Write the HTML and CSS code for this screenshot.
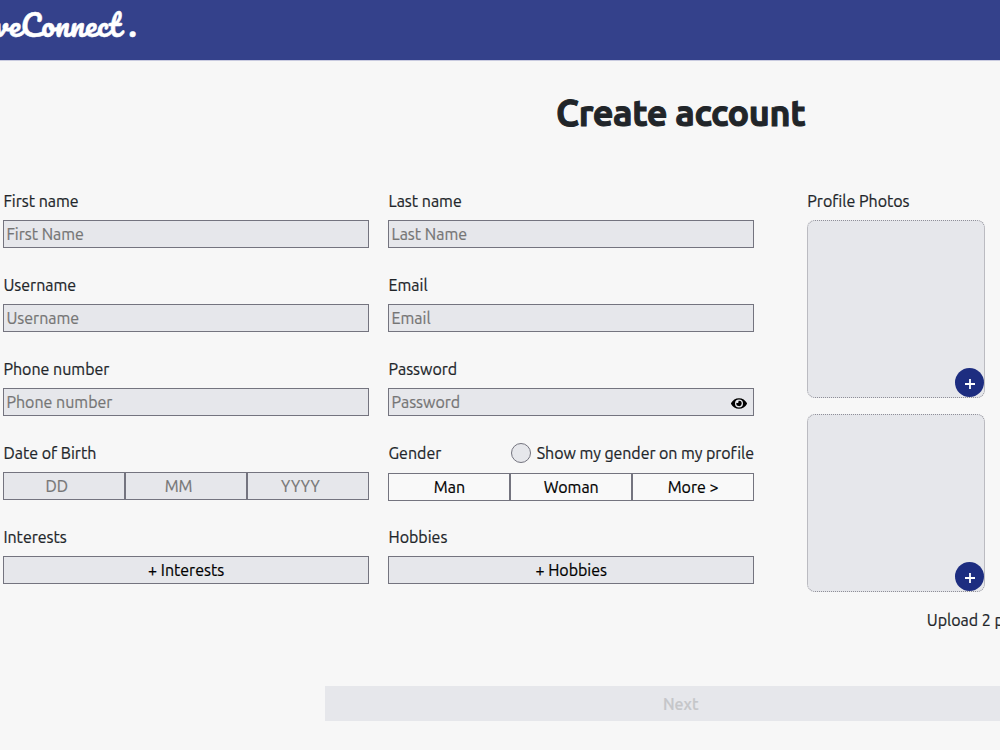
FILE: index.html
```html
<!DOCTYPE html>
<html lang="en">
    <head>
        <meta charset="UTF-8">
        <title>Create account</title>
        <link rel="stylesheet" href="styles.css">
    </head>
    <body>
        <header class="header">
            <div class="logo">LoveConnect&nbsp;.</div>
        </header>
        <main class="page">
            <h1 class="title">Create account</h1>
            <form class="form">
                <div class="fields">
                    <div class="field">
                        <label for="firstName">First name</label>
                        <input class="input" id="firstName" type="text" placeholder="First Name">
                    </div>
                    <div class="field">
                        <label for="lastName">Last name</label>
                        <input class="input" id="lastName" type="text" placeholder="Last Name">
                    </div>
                    <div class="field">
                        <label for="username">Username</label>
                        <input class="input" id="username" type="text" placeholder="Username">
                    </div>
                    <div class="field">
                        <label for="email">Email</label>
                        <input class="input" id="email" type="email" placeholder="Email">
                    </div>
                    <div class="field">
                        <label for="phone">Phone number</label>
                        <input class="input" id="phone" type="tel" placeholder="Phone number">
                    </div>
                    <div class="field">
                        <label for="password">Password</label>
                        <div class="password">
                            <input class="input" id="password" type="password" placeholder="Password">
                            <svg class="eye" viewBox="0 0 576 512">
                                <path d="M572.5 241.4C518.3 135.6 410.9 64 288 64S57.7 135.6 3.5 241.4a32.4 32.4 0 0 0 0 29.2C57.7 376.4 165.1 448 288 448s230.3-71.6 284.5-177.4a32.4 32.4 0 0 0 0-29.2zM288 400a144 144 0 1 1 144-144 143.9 143.9 0 0 1-144 144zm0-240a95.3 95.3 0 0 0-25.3 3.8 47.9 47.9 0 0 1-66.9 66.9A95.8 95.8 0 1 0 288 160z"/>
                            </svg>
                        </div>
                    </div>
                    <div class="field">
                        <label for="day">Date of Birth</label>
                        <div class="group">
                            <input class="input date" id="day" type="text" placeholder="DD">
                            <input class="input date" type="text" placeholder="MM">
                            <input class="input date" type="text" placeholder="YYYY">
                        </div>
                    </div>
                    <div class="field gender">
                        <div class="label-row">
                            <span>Gender</span>
                            <label class="show"><span class="circle"></span><span class="show-text">Show my gender on my profile</span></label>
                        </div>
                        <div class="group">
                            <button class="btn plain" type="button">Man</button>
                            <button class="btn plain" type="button">Woman</button>
                            <button class="btn plain" type="button">More &gt;</button>
                        </div>
                    </div>
                    <div class="field">
                        <label>Interests</label>
                        <button class="btn" type="button">+ Interests</button>
                    </div>
                    <div class="field">
                        <label>Hobbies</label>
                        <button class="btn" type="button">+ Hobbies</button>
                    </div>
                </div>
                <div class="photos">
                    <label>Profile Photos</label>
                    <div class="photo">
                        <span class="add"><svg viewBox="0 0 12 12"><path d="M6 1v10M1 6h10"/></svg></span>
                    </div>
                    <div class="photo">
                        <span class="add"><svg viewBox="0 0 12 12"><path d="M6 1v10M1 6h10"/></svg></span>
                    </div>
                    <p class="hint">Upload 2 photos</p>
                </div>
            </form>
            <button class="next" type="button" disabled>Next</button>
        </main>
    </body>
</html>
```
FILE: styles.css
```css
*{
    margin:0;
    padding:0;
    box-sizing:border-box;
}
html{
    overflow:hidden;
}
body{
    width:1361px;
    background:#fff;
    color:#212529;
    font-family:Ubuntu, "Noto Sans", sans-serif;
    font-size:16px;
    line-height:24px;
    -webkit-text-stroke:0.2px;
}
input,button{
    font:inherit;
}
.header{
    height:61px;
    background:#34418b;
    border-bottom:1px solid #c9cbe0;
}
.logo{
    display:flex;
    justify-content:flex-end;
    width:137px;
    height:50px;
    color:#fff;
    font-family:Pacifico, cursive;
    font-size:30px;
    line-height:50px;
    letter-spacing:0.2px;
    word-spacing:0.5px;
    -webkit-text-stroke:0.5px;
}
.page{
    height:689px;
    padding:28px 3px 0 3.4px;
    background:#f7f7f7;
}
.title{
    font-size:36px;
    font-weight:700;
    line-height:48px;
    letter-spacing:-0.4px;
    text-align:center;
    -webkit-text-stroke:1px;
}
.form{
    display:flex;
    gap:53.3px;
    margin-top:52px;
}
.fields{
    display:grid;
    grid-template-columns:365.5px 365.5px;
    grid-auto-rows:60px;
    gap:24px 19.6px;
}
.field{
    display:flex;
    flex-direction:column;
    gap:7px;
}
.field > label,.label-row,.photos > label{
    height:24px;
}
.input,.btn{
    width:100%;
    height:28px;
    padding:0 2px;
    background:#e6e7eb;
    border:1px solid #74747f;
    border-radius:0;
    line-height:24px;
}
.input::placeholder{
    color:#757575;
}
.password{
    position:relative;
}
.eye{
    position:absolute;
    top:8px;
    right:7px;
    width:16px;
    height:15px;
}
.group{
    display:flex;
}
.date{
    padding-right:17px;
    text-align:center;
}
.gender{
    gap:8px;
}
.label-row,.show{
    display:flex;
    justify-content:space-between;
}
.show{
    align-items:center;
    gap:6px;
    letter-spacing:-0.06px;
}
.circle{
    width:20px;
    height:20px;
    background:#e6e7eb;
    border:1px solid #74747f;
    border-radius:50%;
}
.btn{
    color:#000;
}
.plain{
    background:#f9f9f9;
}
.photos{
    width:551px;
}
.photo{
    position:relative;
    width:178px;
    height:178px;
    margin-bottom:16px;
    background:#e6e7eb;
    border:1px dotted #8f8f98;
    border-radius:8px;
}
.photos > label{
    display:block;
    margin-bottom:7px;
}
.add{
    position:absolute;
    right:0;
    bottom:0;
    display:flex;
    align-items:center;
    justify-content:center;
    width:29px;
    height:29px;
    padding-top:3px;
    background:#1d2d80;
    border-radius:50%;
}
.add svg{
    width:12px;
    height:12px;
    fill:none;
    stroke:#fff;
    stroke-width:1.8;
}
.hint{
    padding-left:119.5px;
}
.next{
    display:block;
    width:711px;
    height:35px;
    margin:54px auto 0;
    background:#e6e7eb;
    border:0;
    color:#c5c6c9;
    font-weight:500;
}
```
